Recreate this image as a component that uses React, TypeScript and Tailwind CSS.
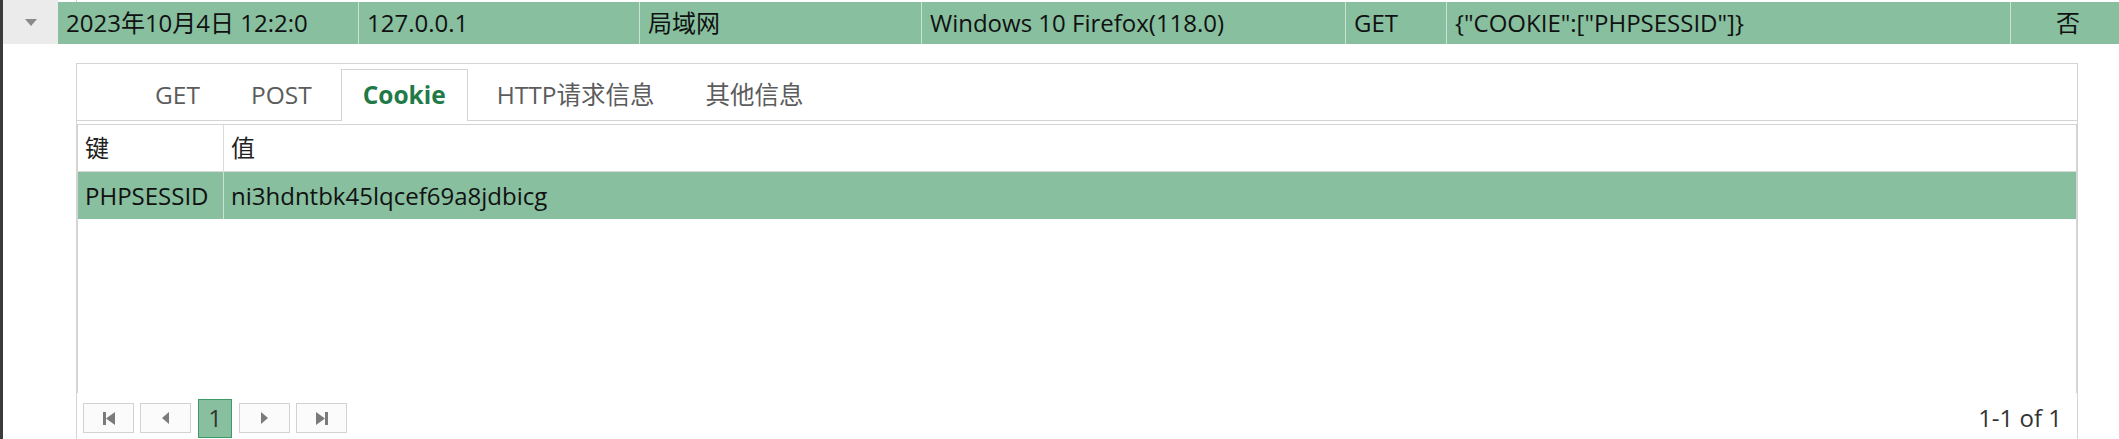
import { useState } from "react";

const cols = [
  { w: "w-[300px]", text: "2023年10月4日 12:2:0" },
  { w: "w-[281px]", text: "127.0.0.1" },
  { w: "w-[282px]", text: "局域网" },
  { w: "w-[424px]", text: "Windows 10 Firefox(118.0)" },
  { w: "w-[101px]", text: "GET" },
  { w: "w-[564px]", text: '{"COOKIE":["PHPSESSID"]}' },
];

const tabs = ["GET", "POST", "Cookie", "HTTP请求信息", "其他信息"];

function PagerIcon({ kind }: { kind: "first" | "prev" | "next" | "last" }) {
  if (kind === "first")
    return (
      <svg width="12" height="13" viewBox="0 0 12 13" fill="#7b7b7b">
        <rect x="0" y="0" width="3" height="13" />
        <path d="M12 0 L3 6.5 L12 13 Z" />
      </svg>
    );
  if (kind === "last")
    return (
      <svg width="12" height="13" viewBox="0 0 12 13" fill="#7b7b7b">
        <path d="M0 0 L9 6.5 L0 13 Z" />
        <rect x="9" y="0" width="3" height="13" />
      </svg>
    );
  if (kind === "prev")
    return (
      <svg width="7" height="12" viewBox="0 0 7 12" fill="#7b7b7b">
        <path d="M7 0 L0 6 L7 12 Z" />
      </svg>
    );
  return (
    <svg width="7" height="12" viewBox="0 0 7 12" fill="#7b7b7b">
      <path d="M0 0 L7 6 L0 12 Z" />
    </svg>
  );
}

function PagerButton({ kind }: { kind: "first" | "prev" | "next" | "last" }) {
  return (
    <button className="flex h-[30px] w-[51px] items-center justify-center border border-[#d2d2d2] bg-[#fbfbfb]">
      <PagerIcon kind={kind} />
    </button>
  );
}

export default function App() {
  const [active, setActive] = useState("Cookie");

  return (
    <div className="flex h-[439px] w-[2119px] overflow-hidden bg-white font-['Open_Sans','Noto_Sans_CJK_SC',sans-serif] text-[24px]">
      <div className="h-full w-[3px] shrink-0 bg-[#3b3b3b]" />
      <div className="flex min-w-0 flex-1 flex-col">
        {/* previous row tail */}
        <div className="flex h-[2px] shrink-0">
          <div className="w-[55px] bg-[#ebebeb]" />
          <div className="ml-[18px] w-px bg-[#d4d4d4]" />
        </div>

        {/* expanded row */}
        <div className="flex h-[42px] shrink-0">
          <div className="flex w-[55px] shrink-0 items-center justify-center bg-[#ebebeb]">
            <svg width="12" height="7" viewBox="0 0 12 7" className="-mt-[2px]">
              <path d="M0 0 L12 0 L6 7 Z" fill="#8a8a8a" />
            </svg>
          </div>
          {cols.map((c, i) => (
            <div
              key={i}
              className={`${c.w} flex shrink-0 items-center bg-[#87bf9f] pl-[8px] text-[#111] ${i > 0 ? "border-l border-[#cde2d6]" : ""}`}
            >
              {c.text}
            </div>
          ))}
          <div className="flex flex-1 items-center justify-center border-l border-[#cde2d6] bg-[#87bf9f] pl-[6px] text-[#111]">
            否
          </div>
        </div>

        {/* detail panel */}
        <div className="shrink-0 pl-[73px] pt-[19px]">
          <div className="flex h-[400px] w-[2002px] flex-col border border-b-0 border-[#d4d4d4]">
            <div className="flex h-[57px] shrink-0 items-end gap-[7px] border-b border-[#d4d4d4] pl-[56px] text-[24.5px]">
              {tabs.map((t) => {
                const on = t === active;
                return (
                  <button
                    key={t}
                    onClick={() => setActive(t)}
                    className={`flex items-center px-[21px] ${
                      on
                        ? "-mb-px h-[52px] border border-b-0 border-[#d4d4d4] bg-white font-bold text-[#1f7a47]"
                        : "h-[51px] border border-b-0 border-transparent text-[#5c5c5c]"
                    }`}
                  >
                    {t}
                  </button>
                );
              })}
            </div>

            <div className="mt-[3px] flex h-[269px] shrink-0 flex-col border-x border-t border-[#d4d4d4]">
              <div className="flex h-[47px] shrink-0 border-b border-[#d9d9d9] text-[#222]">
                <div className="flex w-[146px] items-center border-r border-[#d9d9d9] pl-[7px]">键</div>
                <div className="flex flex-1 items-center pl-[7px]">值</div>
              </div>
              <div className="flex h-[47px] shrink-0 bg-[#87bf9f] text-[#111]">
                <div className="flex w-[146px] items-center border-r border-[#cde2d6] pl-[7px]">PHPSESSID</div>
                <div className="flex flex-1 items-center pl-[7px]">ni3hdntbk45lqcef69a8jdbicg</div>
              </div>
            </div>

            <div className="flex h-[50px] shrink-0 items-center pl-[6px] pr-[15px]">
              <div className="flex items-center gap-[6px]">
                <PagerButton kind="first" />
                <PagerButton kind="prev" />
                <button className="mx-px flex h-[39px] w-[34px] items-center justify-center border border-[#3f9a69] bg-[#87bf9f] text-[#333]">
                  1
                </button>
                <PagerButton kind="next" />
                <PagerButton kind="last" />
              </div>
              <div className="ml-auto text-[#333]">1-1 of 1</div>
            </div>
          </div>
        </div>
      </div>
    </div>
  );
}
